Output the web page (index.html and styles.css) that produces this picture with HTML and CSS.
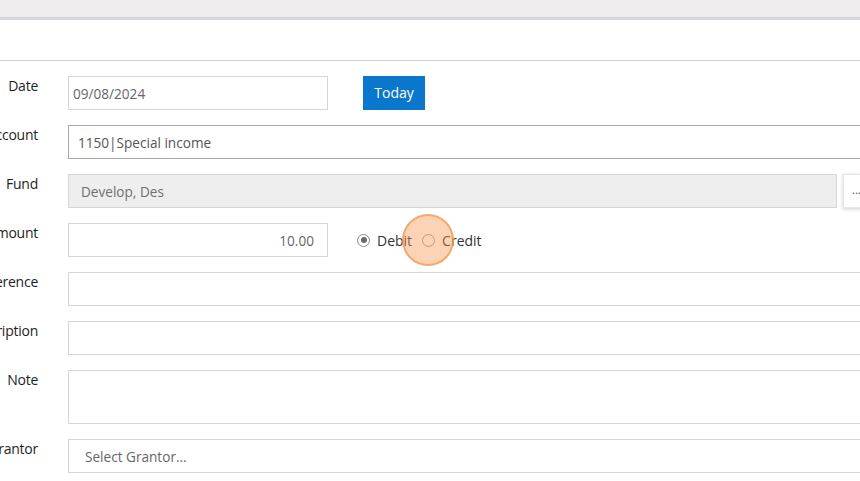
FILE: index.html
```html
<!DOCTYPE html>
<html>
<head>
<meta charset="utf-8">
<link rel="stylesheet" href="styles.css">
</head>
<body>
<div class="topbar"></div>
<div class="header"></div>
<div class="form">
  <div class="row">
    <div class="label">Date</div>
    <div class="field short">09/08/2024</div>
    <div class="btn-today">Today</div>
  </div>
  <div class="row">
    <div class="label">Account</div>
    <div class="field wide dark pad-account">1150|Special income</div>
  </div>
  <div class="row">
    <div class="label">Fund</div>
    <div class="field fund disabled pad-fund">Develop, Des</div>
    <div class="btn-more">...</div>
  </div>
  <div class="row">
    <div class="label">Amount</div>
    <div class="field short right">10.00</div>
    <div class="radios">
      <span class="radio checked"></span><span class="rlabel">Debit</span>
      <span class="radio credit"><span class="click"></span></span><span class="rlabel">Credit</span>
    </div>
  </div>
  <div class="row">
    <div class="label">Reference</div>
    <div class="field wide"></div>
  </div>
  <div class="row">
    <div class="label">Description</div>
    <div class="field wide"></div>
  </div>
  <div class="row">
    <div class="label">Note</div>
    <div class="field wide tall"></div>
  </div>
  <div class="row">
    <div class="label">Grantor</div>
    <div class="field wide pad-grantor">Select Grantor…</div>
  </div>
</div>
</body>
</html>
```
FILE: styles.css
```css
html, body {
  margin: 0;
  padding: 0;
  background: #ffffff;
  overflow: hidden;
  width: 860px;
  height: 481px;
}
body {
  font-family: "Open Sans", "Noto Sans", sans-serif;
  font-size: 14px;
  color: #222222;
}
.topbar {
  height: 17px;
  background: #efedee;
  border-bottom: 3px solid #d5d5dc;
}
.header {
  height: 40px;
  border-bottom: 1px solid #d3d3d3;
}
.form {
  padding-top: 15px;
  display: flex;
  flex-direction: column;
  gap: 15px;
  margin-left: -92px;
}
.row {
  display: flex;
  align-items: flex-start;
  white-space: nowrap;
}
.label {
  width: 130px;
  flex: none;
  text-align: right;
  line-height: 20px;
  margin-right: 30px;
  color: #1e1e1e;
  letter-spacing: -0.25px;
}
.field {
  flex: none;
  box-sizing: border-box;
  height: 34px;
  border: 1px solid #d6d6d6;
  background: #fff;
  color: #666;
  font-size: 13.6px;
  line-height: 33px;
  padding: 0 4px;
}
.short { width: 260px; }
.wide { width: 900px; }
.fund { width: 769px; }
.tall { height: 54px; }
.dark { border-color: #a8a8a8; color: #555; }
.disabled { background: #eeeeee; color: #707070; }
.right { text-align: right; padding-right: 13px; }
.pad-account { padding-left: 9px; }
.pad-fund { padding-left: 12px; }
.pad-grantor { padding-left: 16px; }
.btn-today {
  margin-left: 35px;
  width: 62px;
  height: 34px;
  background: #0a77cc;
  color: #ffffff;
  text-align: center;
  line-height: 33px;
}
.btn-more {
  margin-left: 6px;
  width: 50px;
  height: 34px;
  box-sizing: border-box;
  background: #fff;
  border: 1px solid #e6e6e6;
  box-shadow: 0 1px 4px rgba(0,0,0,0.2);
  color: #444;
  font-size: 11px;
  line-height: 30px;
  padding-left: 8px;
}
.radios {
  display: flex;
  align-items: center;
  height: 34px;
  margin-left: 29px;
}
.radio {
  position: relative;
  width: 13px;
  height: 13px;
  box-sizing: border-box;
  border: 1px solid #8a8a8a;
  border-radius: 50%;
  background: #fff;
  margin-right: 7px;
}
.radio.checked::after {
  content: "";
  position: absolute;
  left: 2.5px;
  top: 2.5px;
  width: 6px;
  height: 6px;
  border-radius: 50%;
  background: #6a6a6a;
}
.radio.credit { border-color: #9a9a9a; }
.rlabel {
  color: #333;
  margin-right: 10px;
}
.click {
  position: absolute;
  left: -21px;
  top: -21px;
  width: 52px;
  height: 52px;
  box-sizing: border-box;
  border-radius: 50%;
  background: rgba(250, 150, 80, 0.42);
  border: 2px solid rgba(240, 150, 80, 0.7);
  z-index: 2;
}
```
